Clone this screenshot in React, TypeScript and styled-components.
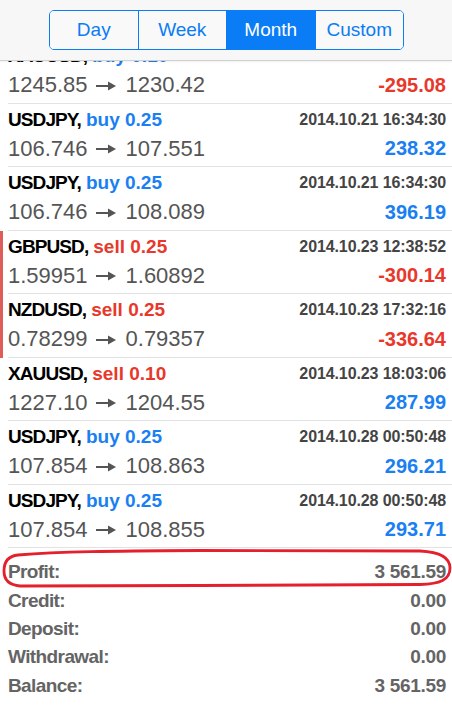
import styled, { createGlobalStyle } from "styled-components";

const GlobalStyle = createGlobalStyle`
  html, body {
    margin: 0;
    padding: 0;
    background: #ffffff;
  }
  body {
    font-family: "Liberation Sans", Arial, sans-serif;
  }
`;

const BLUE = "#1a7ff2";
const RED = "#e8382c";

interface Deal {
  symbol: string;
  side: "buy" | "sell";
  volume: string;
  time: string;
  open: string;
  close: string;
  profit: string;
  marked?: boolean;
}

const deals: Deal[] = [
  { symbol: "XAUUSD", side: "buy", volume: "0.10", time: "2014.10.20 22:05:28", open: "1245.85", close: "1230.42", profit: "-295.08" },
  { symbol: "USDJPY", side: "buy", volume: "0.25", time: "2014.10.21 16:34:30", open: "106.746", close: "107.551", profit: "238.32" },
  { symbol: "USDJPY", side: "buy", volume: "0.25", time: "2014.10.21 16:34:30", open: "106.746", close: "108.089", profit: "396.19" },
  { symbol: "GBPUSD", side: "sell", volume: "0.25", time: "2014.10.23 12:38:52", open: "1.59951", close: "1.60892", profit: "-300.14", marked: true },
  { symbol: "NZDUSD", side: "sell", volume: "0.25", time: "2014.10.23 17:32:16", open: "0.78299", close: "0.79357", profit: "-336.64", marked: true },
  { symbol: "XAUUSD", side: "sell", volume: "0.10", time: "2014.10.23 18:03:06", open: "1227.10", close: "1204.55", profit: "287.99" },
  { symbol: "USDJPY", side: "buy", volume: "0.25", time: "2014.10.28 00:50:48", open: "107.854", close: "108.863", profit: "296.21" },
  { symbol: "USDJPY", side: "buy", volume: "0.25", time: "2014.10.28 00:50:48", open: "107.854", close: "108.855", profit: "293.71" },
];

const totals = [
  { label: "Profit:", value: "3 561.59" },
  { label: "Credit:", value: "0.00" },
  { label: "Deposit:", value: "0.00" },
  { label: "Withdrawal:", value: "0.00" },
  { label: "Balance:", value: "3 561.59" },
];

const periods = ["Day", "Week", "Month", "Custom"];

const Screen = styled.div`
  position: relative;
  width: 452px;
  height: 705px;
  overflow: hidden;
  background: #fff;
`;

const Header = styled.div`
  position: absolute;
  top: 0;
  left: 0;
  right: 0;
  z-index: 2;
  height: 61px;
  background: #f7f7f7;
  border-bottom: 1px solid #cfcfcf;
  box-shadow: 0 1px 2px rgba(0, 0, 0, 0.06);
  display: flex;
  justify-content: center;
  padding-top: 10px;
  box-sizing: border-box;
`;

const Segmented = styled.div`
  display: flex;
  width: 355px;
  height: 40px;
  border: 1px solid #0a7cf5;
  border-radius: 5px;
  overflow: hidden;
  box-sizing: border-box;
  margin-left: 1px;
`;

const Segment = styled.div<{ $active?: boolean }>`
  flex: 1;
  display: flex;
  align-items: center;
  justify-content: center;
  font-size: 19px;
  color: ${(p) => (p.$active ? "#fff" : "#0a7cf5")};
  background: ${(p) => (p.$active ? "#0a7cf5" : "#f9f9f9")};
  & + & {
    border-left: 1px solid #0a7cf5;
  }
`;

const List = styled.div`
  padding-top: 40px;
`;

const Row = styled.div<{ $marked?: boolean }>`
  position: relative;
  height: 63.5px;
  box-sizing: border-box;
  padding: 4px 6px 0 8px;
  &::after {
    content: "";
    position: absolute;
    left: 8px;
    right: 0;
    bottom: 0;
    height: 1px;
    background: #e2e2e2;
  }
  &::before {
    content: "";
    display: ${(p) => (p.$marked ? "block" : "none")};
    position: absolute;
    left: 0;
    top: 0;
    bottom: 0;
    width: 3px;
    background: #de5d58;
  }
`;

const Line = styled.div<{ $tall?: boolean }>`
  display: flex;
  justify-content: space-between;
  align-items: center;
  height: ${(p) => (p.$tall ? "26px" : "24px")};
  margin-top: ${(p) => (p.$tall ? "4px" : "0")};
  white-space: nowrap;
`;

const Title = styled.div`
  font-size: 19px;
  font-weight: bold;
`;

const Symbol = styled.span`
  color: #000;
  letter-spacing: -0.9px;
`;

const Side = styled.span<{ $sell?: boolean }>`
  color: ${(p) => (p.$sell ? RED : BLUE)};
  margin-left: 5px;
`;

const Time = styled.div`
  font-size: 16px;
  font-weight: bold;
  color: #444;
  letter-spacing: -0.1px;
`;

const Prices = styled.div`
  display: flex;
  align-items: center;
  font-size: 22px;
  color: #555;
`;

const ArrowIcon = styled.svg`
  margin: 1px 10px 0 8px;
`;

const Profit = styled.div<{ $negative?: boolean }>`
  font-size: 20px;
  font-weight: bold;
  color: ${(p) => (p.$negative ? RED : BLUE)};
`;

const Summary = styled.div`
  position: relative;
  padding: 10px 6px 0 8px;
`;

const SummaryRow = styled.div`
  display: flex;
  justify-content: space-between;
  align-items: center;
  height: 28.4px;
  font-weight: bold;
  color: #646464;
  font-size: 19px;
`;

const SummaryLabel = styled.span`
  letter-spacing: -0.6px;
`;

const SummaryValue = styled.span`
  letter-spacing: -0.3px;
`;

const Annotation = styled.svg`
  position: absolute;
  top: -1px;
  left: 0;
  pointer-events: none;
`;

const Arrow = () => (
  <ArrowIcon width="20" height="10" viewBox="0 0 20 10">
    <rect x="0" y="4" width="13" height="2" fill="#555" />
    <path d="M12 0.5 L20 5 L12 9.5 Z" fill="#555" />
  </ArrowIcon>
);

const App = () => {
  return (
    <>
      <GlobalStyle />
      <Screen>
        <Header>
          <Segmented>
            {periods.map((p) => (
              <Segment key={p} $active={p === "Month"}>
                {p}
              </Segment>
            ))}
          </Segmented>
        </Header>
        <List>
          {deals.map((d, i) => (
            <Row key={i} $marked={d.marked}>
              <Line>
                <Title>
                  <Symbol>{d.symbol},</Symbol>
                  <Side $sell={d.side === "sell"}>
                    {d.side} {d.volume}
                  </Side>
                </Title>
                <Time>{d.time}</Time>
              </Line>
              <Line $tall>
                <Prices>
                  {d.open}
                  <Arrow />
                  {d.close}
                </Prices>
                <Profit $negative={d.profit.startsWith("-")}>{d.profit}</Profit>
              </Line>
            </Row>
          ))}
        </List>
        <Summary>
          {totals.map((t) => (
            <SummaryRow key={t.label}>
              <SummaryLabel>{t.label}</SummaryLabel>
              <SummaryValue>{t.value}</SummaryValue>
            </SummaryRow>
          ))}
          <Annotation width="452" height="44" viewBox="0 0 452 44">
            <path
              d="M18 8 C60 4.5 110 4 200 3.5 L420 4 C440 5 450 10 450 21 C450 33 440 37 420 37.5 L200 38.5 C100 39 40 39.5 20 39 C8 38 4 32 4 24 C4 15 8 9 18 8 Z"
              fill="none"
              stroke="#e3202b"
              strokeWidth="2.8"
            />
          </Annotation>
        </Summary>
      </Screen>
    </>
  );
};

export default App;
